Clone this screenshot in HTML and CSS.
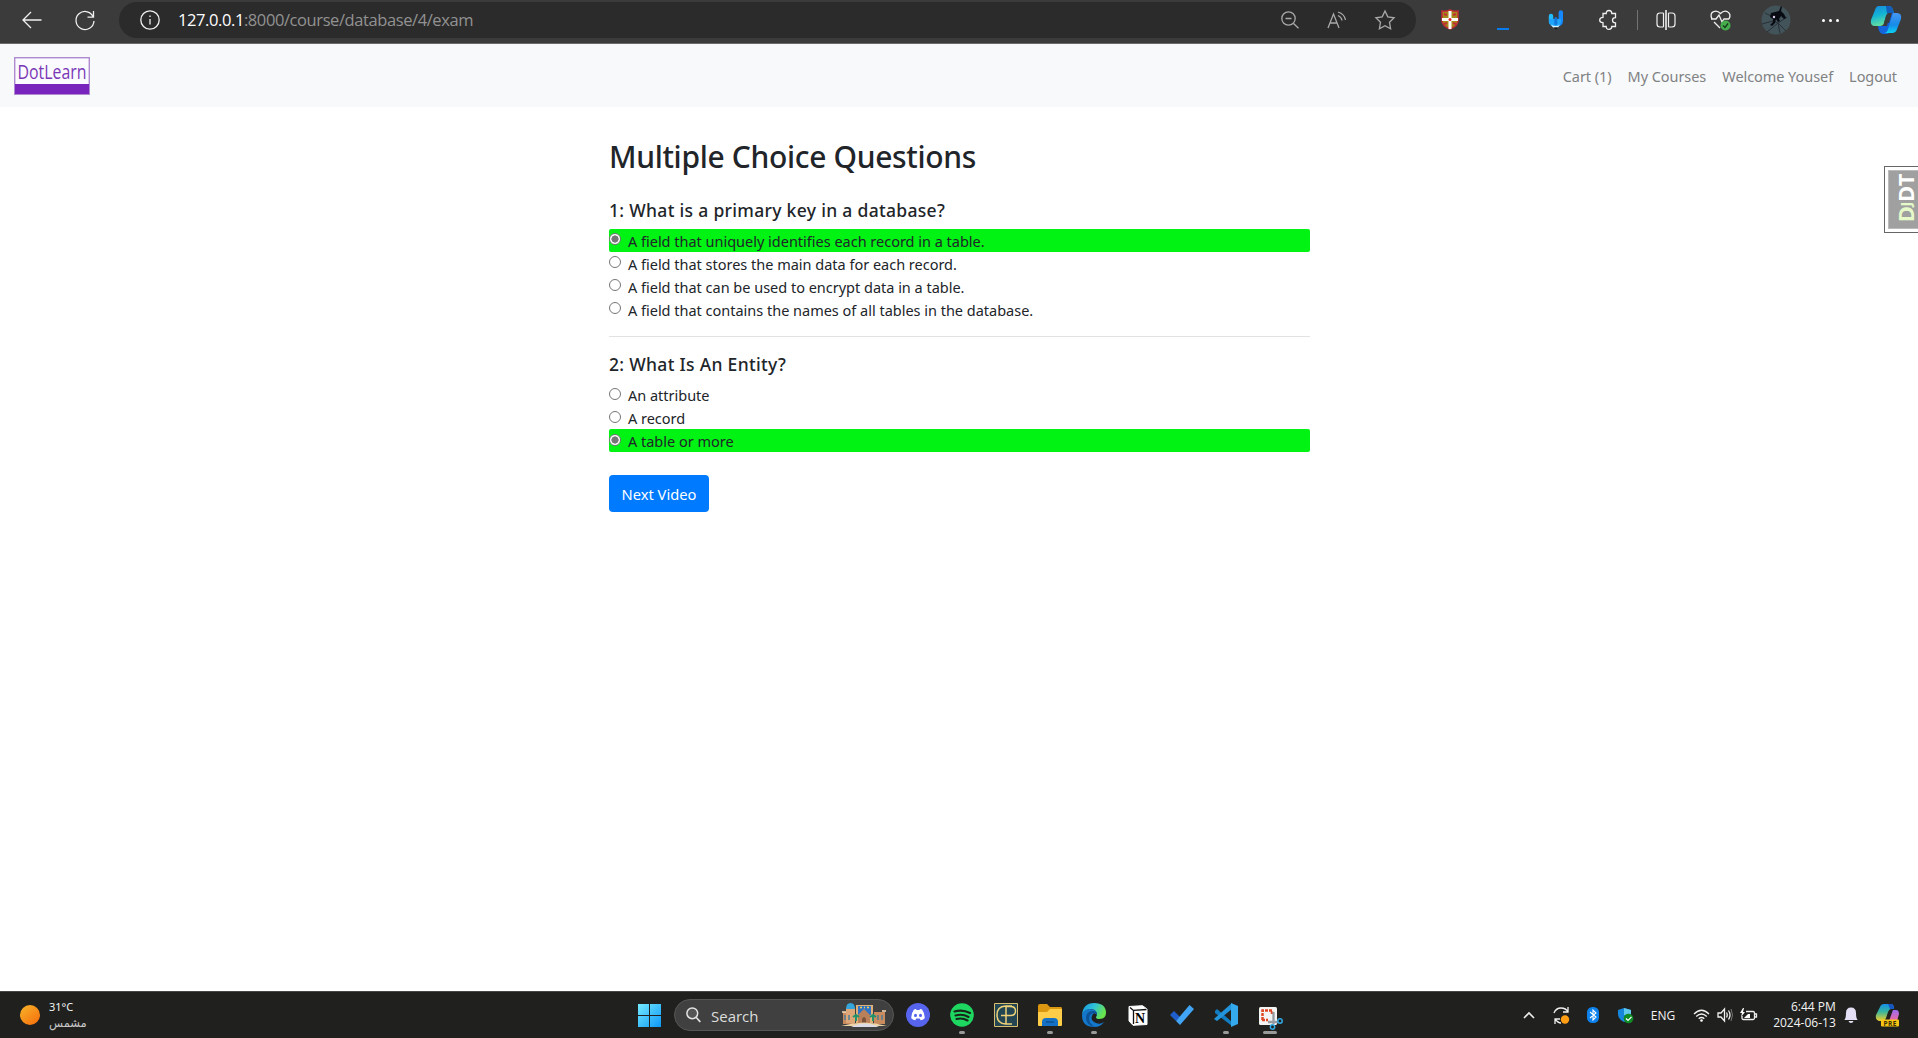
FILE: index.html
```html
<!DOCTYPE html>
<html lang="en">
<head>
<meta charset="utf-8">
<title>Multiple Choice Questions</title>
<link rel="stylesheet" href="styles.css">
</head>
<body>
<header class="toolbar">
  <div class="tool-nav">
    <svg width="20" height="18" viewBox="0 0 20 18" class="line"><path d="M19.500 9H1M9 1L1 9l8 8"/></svg>
    <svg width="20" height="20" viewBox="0 0 20 20" class="line"><path d="M18.500 7.500A9 9 0 1 0 19 11M18.500 1v6.200h-6"/></svg>
  </div>
  <div class="address">
    <svg width="20" height="20" viewBox="0 0 20 20" class="line"><circle cx="10" cy="10" r="9.200"/><path d="M10 9v5.500M10 5.500v1.600"/></svg>
    <span class="url"><b>127.0.0.1</b>:8000/course/database/4/exam</span>
    <div class="address-actions">
      <svg width="18" height="18" viewBox="0 0 18 18" class="line dim"><circle cx="7.500" cy="7.500" r="6.700"/><path d="M12.500 12.500l5 4.800M4.500 7.500h6"/></svg>
      <svg width="20" height="18" viewBox="0 0 20 18" class="line dim"><path d="M1 17L6.500 3 12 17M3 12h7M11 4.500q3.500 1.500 4 5M11 1q6.500 2 7.500 8"/></svg>
      <svg width="20" height="20" viewBox="0 0 20 20" class="line dim"><path d="M10 1l2.800 5.900 6.300.9-4.600 4.500 1.100 6.500-5.600-3-5.600 3 1.100-6.500L.9 7.800l6.300-.9z"/></svg>
    </div>
  </div>
  <div class="extensions">
    <span><svg width="18" height="20" viewBox="0 0 18 20"><path d="M1 1q4 1 8-1 4 2 8 1v9q0 6-8 9-8-3-8-9z" fill="#a68a19" stroke="#c02e36" stroke-width="1.500"/><path d="M3 4l3 1m6 0l3-1M3 14l3-1m6 0l3 1" stroke="#c02e36" stroke-width="2"/><path d="M7.500 1h3v7h6.500v3h-6.500v8h-3v-8H1V8h6.500z" fill="#fff"/><circle cx="9" cy="9.500" r="1.500" fill="#d22"/></svg></span>
    <span><i class="download-mark"></i></span>
    <span><svg width="16" height="20" viewBox="0 0 16 20"><path d="M3 6v6" stroke="#22bdfb" stroke-width="4.400" stroke-linecap="round"/><path d="M12.800 2.500V11q0 3-3.500 3.500" stroke="#1688ff" stroke-width="4.400" stroke-linecap="round" fill="none"/><path d="M1 12V9h12v3q-1 5-6 5t-6-5z" fill="#1fa5fb"/><path d="M7.800 8.500v5" stroke="#1479dd" stroke-width="3" stroke-linecap="round"/><path d="M3 14.500q5 3 9 0l-2 3H5z" fill="#d9f3ff"/><path d="M6 17.500h4l-2 2z" fill="#111"/></svg></span>
    <span><svg width="19" height="20" viewBox="0 0 19 20" class="line"><path d="M4 3.500h3.200q0-3 2.800-3t2.800 3H16.500v4.200q-3 0-3 2.600t3 2.600v3.600h-3.700q0 2.800-2.800 2.800t-2.800-2.800H4v-3.800q-3.300-.2-3.300-2.700T4 7.300z"/></svg></span>
  </div>
  <i class="divider"></i>
  <div class="browser-tools">
    <span><svg width="20" height="20" viewBox="0 0 20 20" class="line"><path d="M7.500 3H4Q1 3 1 6v8q0 3 3 3h3.500M12.500 3H16q3 0 3 3v8q0 3-3 3h-3.500M7.500 3v14M12.500 3v14" stroke-width="1.200"/><path d="M10 0v20" stroke-width="1.600"/></svg></span>
    <span><svg width="21" height="21" viewBox="0 0 21 21"><path class="line" d="M2 9Q-.5 3.500 3.500 1.700 7-.2 10.500 3.500 14-.2 17.500 1.700 21.500 4 19 9M1 9h5l3-4 3 7 2-3h5M4 12l6 6"/><circle cx="15.500" cy="15.500" r="5" fill="#46ad4d"/><path d="M13 15.500l2 2 3-4" fill="none" stroke="#163f1c" stroke-width="1.400"/></svg></span>
    <span><svg width="30" height="30" viewBox="0 0 30 30"><circle cx="15" cy="15" r="14.500" fill="#43535a"/><path d="M1 19l11-3 5 2 9-6M6 27l11-9 8 8M17 18l2 10M4 8l8 4" stroke="#283036" fill="none"/><path d="M10 8l4-1 4-1 2-5 1 1-1 4 3 3 2 4-2 1-3-3-2 3 1 2-2 1-2-3-1 4-3 3-2-1 3-3v-3l-3-2z" fill="#080b12"/><circle cx="13" cy="12" r="1.200" fill="#dce"/></svg></span>
    <span class="dots"><i></i><i></i><i></i></span>
    <span><svg width="30" height="28" viewBox="0 0 30 28"><defs><linearGradient id="teal" x2=".3" y2="1"><stop stop-color="#1789dd"/><stop offset=".5" stop-color="#12b4d5"/><stop offset="1" stop-color="#65dfa0"/></linearGradient><linearGradient id="azure" x2="0" y2="1"><stop stop-color="#4896f2"/><stop offset=".6" stop-color="#168be8"/><stop offset="1" stop-color="#0ad3f6"/></linearGradient></defs><path d="M7 20h9l3-13h5l-3 15q-1 5-5 6h-4q-4 0-5-8z" fill="#1464dd"/><path d="M8 0h10q3 0 4 4l1 3h-5q-2 0-3 3l-2 7q-1 3-4 3H4q-5 0-4-6L4 4q1-4 4-4z" fill="url(#teal)"/><path d="M15 0h3q3 0 4 4l1 3h-5q-1 0-2 1z" fill="#135dbb"/><path d="M22 7h4q5 0 4 6l-4 10q-1 4-5 4h-8q3 0 4-4l4-13q1-3 1-3z" fill="url(#azure)"/><path d="M15 10q1-3 3-3h3l-3 10h-5z" fill="#3b3b3b"/></svg></span>
  </div>
</header>

<nav class="site-nav">
  <svg class="brand" width="76" height="38" viewBox="0 0 76 38"><rect x=".7" y=".7" width="74.600" height="36.600" fill="#fbfaff" stroke="#ae8bd0" stroke-width="1.400"/><path d="M1 27h74v10H1z" fill="#7924bd"/><text x="3.500" y="22" textLength="69" lengthAdjust="spacingAndGlyphs">DotLearn</text></svg>
  <div class="links"><a>Cart (1)</a><a>My Courses</a><a>Welcome Yousef</a><a>Logout</a></div>
</nav>

<main class="page">
  <form class="exam">
    <h2>Multiple Choice Questions</h2>
    <h5 class="q1">1: What is a primary key in a database?</h5>
    <label class="option correct"><input type="radio" name="q1" checked><span>A field that uniquely identifies each record in a table.</span></label>
    <label class="option"><input type="radio" name="q1"><span>A field that stores the main data for each record.</span></label>
    <label class="option"><input type="radio" name="q1"><span>A field that can be used to encrypt data in a table.</span></label>
    <label class="option"><input type="radio" name="q1"><span>A field that contains the names of all tables in the database.</span></label>
    <hr>
    <h5 class="q2">2: What Is An Entity?</h5>
    <label class="option"><input type="radio" name="q2"><span>An attribute</span></label>
    <label class="option"><input type="radio" name="q2"><span>A record</span></label>
    <label class="option correct"><input type="radio" name="q2" checked><span>A table or more</span></label>
    <button type="button" class="next">Next Video</button>
  </form>
  <aside class="debug-handle"><div><span><em>D<small>J</small></em>DT</span></div></aside>
</main>

<footer class="taskbar">
  <div class="weather"><i class="sun"></i><div><p>31°C</p><p class="arabic" lang="ar" dir="rtl">مشمس</p></div></div>
  <div class="apps">
    <svg class="start" width="23" height="23" viewBox="0 0 23 23"><defs><linearGradient id="win" x2="1" y2="1"><stop stop-color="#74eaff"/><stop offset="1" stop-color="#0d98f8"/></linearGradient></defs><path d="M0 0h11v11H0zM12 0h11v11H12zM0 12h11v11H0zM12 12h11v11H12z" fill="url(#win)"/></svg>
    <div class="search">
      <svg width="15" height="16" viewBox="0 0 15 16"><circle cx="6.300" cy="6.300" r="5.400" fill="#555" stroke="#e4e4e4" stroke-width="1.500"/><path d="M10.300 10.500l4 4.500" stroke="#e4e4e4" stroke-width="1.700"/></svg>
      <span>Search</span>
      <svg class="palace" width="46" height="24" viewBox="0 0 46 24"><path d="M2 9h11v12H2zM33 9h11v12H33z" fill="#c98b5d"/><path d="M5 5h9v15H5z" fill="#dea778"/><path d="M5 6q0-6 4.500-6T14 6z" fill="#35a5db"/><path d="M15 2h17v18H15z" fill="#e0b078"/><path d="M17 3h13v9H17z" fill="#2f74c4"/><path d="M17 21v-9l6-6 6 6v9z" fill="#b98059"/><path d="M21 20v-4q2-4 4 0v4z" fill="#7d523b"/><path d="M19 4.500h2m2 0h1m2 0h2" stroke="#f9d04c" stroke-width="1.500"/><path d="M4 12v5m4-5v5m29-5v5m4-5v5" stroke="#4e7c94" stroke-width="1.500"/><path d="M12 14l3-2 3 2m-3-2v6M29 14l3-2 3 2m-3-2v6" stroke="#20936b" stroke-width="2" fill="none"/><path d="M1 9h4M41 8h4" stroke="#f3dcba" stroke-width="1.500"/><path d="M0 23q23-7 46 0z" fill="#efd2a6"/><path d="M10 24q13-7 28 0z" fill="#dcdbe5"/></svg>
    </div>
    <span class="app"><svg width="24" height="24" viewBox="0 0 24 24"><circle cx="12" cy="12" r="12" fill="#5764ee"/><path d="M8 6.500l2-.6.5 1h3l.5-1 2 .6q3 4 2.700 8.700-2 1.800-4 2l-1-1.600h-3.400l-1 1.600q-2-.2-4-2Q5 10.500 8 6.500z" fill="#fff"/><ellipse cx="9.500" cy="12.400" rx="1.500" ry="1.700" fill="#5764ee"/><ellipse cx="14.500" cy="12.400" rx="1.500" ry="1.700" fill="#5764ee"/></svg></span>
    <span class="app open"><svg width="24" height="24" viewBox="0 0 24 24"><circle cx="12" cy="12" r="11.800" fill="#1ed760"/><path d="M4.500 8.500q8-2.400 15.500 1.500M5.500 12.500q7-2 13 1.500M6.500 16q6-1.500 11 1.500" fill="none" stroke="#172619" stroke-width="2.100" stroke-linecap="round"/></svg></span>
    <span class="app"><svg width="24" height="24" viewBox="0 0 24 24"><path d="M.5.500h23v23H.5z" fill="#234652" stroke="#d8be70"/><path d="M18 3h-6.500Q3 3.500 3 12t8.500 9H18M12 3v18M12 3.500h4.500q5 0 5 4.500t-5 4.500H7" fill="none" stroke="#efd278" stroke-width="1.500"/></svg></span>
    <span class="app open"><svg width="25" height="23" viewBox="0 0 25 23"><path d="M0 5V2q0-2 2-2h7l3 3h11q1 0 1 2v5H0z" fill="#dc9710"/><path d="M0 8h9l3-3h12v16q0 1-1 1H1q-1 0-1-1z" fill="#ffcd48"/><path d="M4 22v-4q0-4 4-4h8q4 0 4 4v4z" fill="#1471c6"/><path d="M8 18h8" stroke="#0d508f" stroke-width="1.500"/></svg></span>
    <span class="app open"><svg width="24" height="24" viewBox="0 0 24 24"><defs><linearGradient id="sea" x2="1" y2=".4"><stop stop-color="#1393db"/><stop offset=".5" stop-color="#2fc2da"/><stop offset="1" stop-color="#69e34e"/></linearGradient></defs><path d="M0 12Q1 0 12 0q12 0 12 10 0 6-7 6-3 0-3-2 1-1 1-3-1-5-7-5-6 1-8 6z" fill="url(#sea)"/><path d="M0 12Q1 6 8 6q7 0 7 6-2-3-4-1-4 6 3 9 4 2 8-1-3 5-10 5Q0 24 0 12z" fill="#1477ca"/><path d="M8 12q-3 8 5 12Q4 22 4 15t7-7q4 0 4 4-3-4-7 0z" fill="#0c5297"/></svg></span>
    <span class="app"><svg width="20" height="21" viewBox="0 0 20 21"><path d="M1 1.500L14.500.7 19 4v15.500L5 20.300 1 16z" fill="#fff" stroke="#fff"/><path d="M2 2.500l3.500 3V19M5.500 5.300L18.500 4.500" fill="none" stroke="#111" stroke-width="1.300"/><text x="7" y="17.500" class="notion">N</text></svg></span>
    <span class="app"><svg width="24" height="20" viewBox="0 0 24 20"><path d="M0 10l4-4 6 6-4 4z" fill="#205dcd"/><path d="M6 16L19.500 0 24 4 10 20z" fill="#41a4f4"/></svg></span>
    <span class="app open"><svg width="24" height="24" viewBox="0 0 24 24"><path d="M1 8l2-2 15 13v4L1 10z" fill="#127cc2"/><path d="M1 15L18 0v6L3 18 0 16z" fill="#2294dc"/><path d="M17 0l7 3v18l-7 3z" fill="#34a9ed"/></svg></span>
    <span class="app open active"><svg class="snip" width="25" height="25" viewBox="0 0 25 25"><rect x="1" y="2" width="18" height="18" rx="1.500" fill="#f4f4f5"/><path d="M4.500 15V5.500H14V9M4 15h6" fill="none" stroke="#df4824" stroke-width="2.500" stroke-dasharray="3 1"/><path d="M15.500 7v12M10 17h10" stroke="#969ca3" stroke-width="2.300"/><circle cx="22" cy="16" r="2.200" fill="none" stroke="#30a9e4" stroke-width="1.500"/><circle cx="14.500" cy="22" r="2.200" fill="none" stroke="#30a9e4" stroke-width="1.500"/></svg></span>
  </div>
  <div class="tray">
    <span class="slot"><svg width="12" height="8" viewBox="0 0 12 8"><path d="M1 7l5-5 5 5" fill="none" stroke="#eee" stroke-width="1.600"/></svg></span>
    <span class="slot"><svg width="17" height="17" viewBox="0 0 17 17"><path class="line" d="M1 6Q3 1 8 1q5 0 7 4M15 0v5h-5M2 17v-5h5M2 12q3 4 6 4"/><circle cx="12" cy="12.500" r="4.200" fill="#ff9d13"/></svg></span>
    <span class="slot"><svg width="12" height="16" viewBox="0 0 12 16"><rect width="12" height="16" rx="5.500" fill="#0d82ed"/><path d="M3 5l6 5-3 3V3l3 3-6 5" fill="none" stroke="#fff" stroke-width="1.100"/></svg></span>
    <span class="slot"><svg width="17" height="17" viewBox="0 0 17 17"><path d="M1 3l6-2 7 2v5q0 5-7 7-6-3-6-8z" fill="#1686dc"/><path d="M7 1l7 2v5H7z" fill="#61c9ed"/><circle cx="11.500" cy="11.500" r="4.800" fill="#0f8c25"/><path d="M9 11.500l2 2 3.500-3.700" fill="none" stroke="#fff" stroke-width="1.200"/></svg></span>
    <span class="lang">ENG</span>
    <svg class="wifi" width="17" height="13" viewBox="0 0 17 13"><path class="line" d="M1 5q7.500-7.500 15 0M3.200 7.500q5.300-5 10.600 0M5.700 9.700q2.800-2.500 5.600 0"/><circle cx="8.500" cy="11.500" r="1.300" fill="#fff"/></svg>
    <svg class="sound" width="16" height="14" viewBox="0 0 16 14"><path class="line" d="M1 5h3l3.500-4v12L4 9H1zM9.500 4.500q1.500 2.500 0 5M11.500 2.500q3 4.500 0 9"/><path d="M14 1q3 6 0 12" fill="none" stroke="#777"/></svg>
    <svg class="battery" width="17" height="14" viewBox="0 0 17 14"><path class="line" d="M6 3.500h7q1.500 0 1.500 1.500v5q0 1.500-1.500 1.500H3.500Q2 11.500 2 10V8M15 6h1.500v3H15"/><path d="M3 0L0 5h2l-1 4 4-5H3l1-4z" fill="#fff"/><path d="M4 10l4-4h2v4z" fill="#fff"/></svg>
    <div class="clock"><p>6:44 PM</p><p class="date">2024-06-13</p></div>
    <svg class="bell" width="14" height="16" viewBox="0 0 14 16"><path d="M1 12q1-2 1-6 0-5.500 5-5.500T12 6q0 4 1 6l.7 1H.3zM4.500 14h5Q9 16 7 16t-2.500-2z" fill="#e4dff4"/></svg>
    <svg class="pre" width="24" height="23" viewBox="0 0 24 23"><defs><linearGradient id="rain" x2="0" y2="1"><stop stop-color="#168fe9"/><stop offset=".45" stop-color="#36b59e"/><stop offset="1" stop-color="#f4cf28"/></linearGradient><linearGradient id="pink" x2="0" y2="1"><stop stop-color="#9c6cf0"/><stop offset="1" stop-color="#f2699d"/></linearGradient></defs><path d="M8 0h7q3 0 3 5h-3q-2 0-3 3l-2 6q-1 3-3 3H3q-4-1-3-6L4 3q1-3 4-3z" fill="url(#rain)"/><path d="M12 0h3q3 0 3 5h-4z" fill="#1756c0"/><path d="M17 6h3q3 0 3 4l-2 7h-8z" fill="url(#pink)"/><rect x="5" y="15.500" width="18" height="7" rx="1" fill="#f8c414"/><text x="7.500" y="21.600" class="badge" textLength="13">PRE</text></svg>
  </div>
</footer>
</body>
</html>
```

FILE: styles.css
```css
* { box-sizing: border-box; }
body {
  margin: 0; height: 1038px; overflow: hidden; display: flex; flex-direction: column;
  background: #fff; color: #212529; font: 15px/23px "Noto Sans", "Open Sans", sans-serif;
}
p, h2, h5 { margin: 0; }
svg { display: block; flex: none; overflow: visible; }
.line { fill: none; stroke: #f0f0f0; stroke-width: 1.3; }
.dim { stroke: #a9a9a9; }

/* Browser toolbar */
.toolbar { height: 44px; flex: none; display: flex; padding-top: 2px; background: #3b3b3b; border-bottom: 1px solid #6b6969; }
.tool-nav { width: 119px; height: 36px; padding-left: 22px; display: flex; align-items: center; gap: 33px; }
.address { width: 1297px; height: 36px; display: flex; align-items: center; padding: 0 21px 0 21px; border-radius: 18px; background: #2b2b2b; }
.url { margin-left: 18px; color: #929292; font: 16.5px/22px "Open Sans", sans-serif; letter-spacing: -.41px; white-space: nowrap; }
.url b { color: #fff; font-weight: 400; }
.address-actions { margin-left: auto; display: flex; align-items: center; gap: 28px; }
.extensions { display: flex; height: 36px; margin-left: 7px; }
.extensions span { width: 53px; display: flex; align-items: center; justify-content: center; }
.download-mark { width: 12px; height: 2px; background: #087cec; margin-top: 17px; }
.divider { width: 1px; height: 20px; margin: 8px 1px 0 2px; background: #737373; }
.browser-tools { display: flex; height: 36px; margin-left: -1px; }
.browser-tools span { width: 55px; display: flex; align-items: center; justify-content: center; }
.browser-tools .dots { gap: 4px; }
.dots i { width: 3px; height: 3px; border-radius: 50%; background: #fff; }

/* Site navigation */
.site-nav { height: 63px; flex: none; display: flex; justify-content: space-between; padding: 12px 21px 0 14px; background: #f8f9fb; }
.brand { margin-top: 1px; }
.brand text { font: 20.5px "Open Sans", sans-serif; fill: #7a38b6; }
.links { display: flex; gap: 16px; padding-top: 9px; color: #808283; font-size: 14.5px; letter-spacing: -.06px; white-space: nowrap; }

/* Exam */
.page { flex: 1; position: relative; }
.exam { width: 701px; margin-left: 609px; padding-top: 29px; display: flex; flex-direction: column; }
h2 { height: 41px; font: 500 30px/41px "Noto Sans", sans-serif; letter-spacing: -.33px; white-space: nowrap; }
h5 { height: 23px; font: 500 17.5px/23px "Noto Sans", sans-serif; letter-spacing: .31px; white-space: nowrap; }
.q1 { margin: 22px 0 7px; }
.q2 { margin: 16px 0 7px; }
.option { height: 23px; display: flex; gap: 7px; border-radius: 2px; font-size: 14.5px; line-height: 25px; letter-spacing: -.01px; white-space: nowrap; }
.option input { appearance: none; width: 12px; height: 12px; margin: 4px 0 0; border: 1px solid #767676; border-radius: 50%; background: #fff; }
.option input:checked { background: radial-gradient(circle, #767676 3.300px, #fff 3.900px); }
.q2 ~ .option input { margin-top: 5px; }
.correct { background: #00f313; }
hr { width: 100%; height: 1px; margin: 15px 0 0; border: 0; background: #e2e2e2; }
.next { width: 100px; height: 37px; margin-top: 23px; padding: 1px 0 0; border: 0; border-radius: 4px; background: #007bff; color: #fff; font: 14.7px/22px "Noto Sans", sans-serif; white-space: nowrap; }
.debug-handle { position: absolute; right: 0; top: 59px; width: 34px; height: 67px; padding: 3px 0 3px 3px; border: 1px solid #666; border-right: 0; background: #fff; }
.debug-handle div { height: 59px; display: flex; align-items: center; justify-content: center; padding: 0 0 2px 2px; background: #a0a0a0; border: 1px solid #bbb; border-right: 0; }
.debug-handle span { writing-mode: vertical-rl; transform: rotate(180deg); color: #fff; font: 700 22px/22px "Open Sans", sans-serif; letter-spacing: -.5px; }
.debug-handle em { color: #e6fac9; font-style: normal; }
.debug-handle small { font-size: 15px; }

/* Desktop taskbar */
.taskbar { height: 47px; flex: none; display: flex; align-items: center; background: #20211f; border-top: 1px solid #454744; color: #f3f3f3; }
.weather { width: 638px; padding: 0 0 1px 20px; display: flex; align-items: center; gap: 9px; font-size: 11px; line-height: 16px; }
.sun { width: 20px; height: 20px; border-radius: 50%; background: linear-gradient(140deg, #f7b52a, #f66b0b); }
.arabic { color: #c8c8c8; font: 11.5px/16px "DejaVu Sans", sans-serif; }
.apps { display: flex; align-items: center; width: 879px; height: 46px; }
.search { width: 220px; height: 32px; margin: 0 2px 0 13px; padding: 0 6px 0 11px; display: flex; align-items: center; background: #3f403f; border: 1px solid #565656; border-radius: 16px; font: 15px/22px "Open Sans", sans-serif; }
.search span { margin: 2px 0 0 10px; color: #ddd; }
.palace { margin-left: auto; }
.app { width: 44px; height: 46px; display: flex; align-items: center; justify-content: center; position: relative; }
.snip { margin-top: 4px; }
.open::after { content: ""; position: absolute; bottom: 4px; left: 19px; width: 6px; height: 3px; border-radius: 2px; background: #999; }
.active::after { left: 15px; width: 14px; }
.notion { font: 700 14px "Liberation Serif", serif; }
.tray { display: flex; align-items: center; width: 401px; height: 46px; }
.slot { width: 32.200px; margin-left: -4px; margin-right: 4px; display: flex; justify-content: center; }
.lang { width: 35px; margin: 2px 0 0 5px; font: 12px/18px "Open Sans", sans-serif; }
.wifi { margin-left: 7px; }
.sound { margin-left: 7px; }
.battery { margin-left: 7px; }
.clock { width: 79px; text-align: right; font: 12px/16px "Open Sans", sans-serif; white-space: nowrap; }
.bell { margin-left: 8px; }
.pre { margin-left: 18px; }
.badge { font: 700 6.500px "Open Sans", sans-serif; fill: #342b06; }
```
